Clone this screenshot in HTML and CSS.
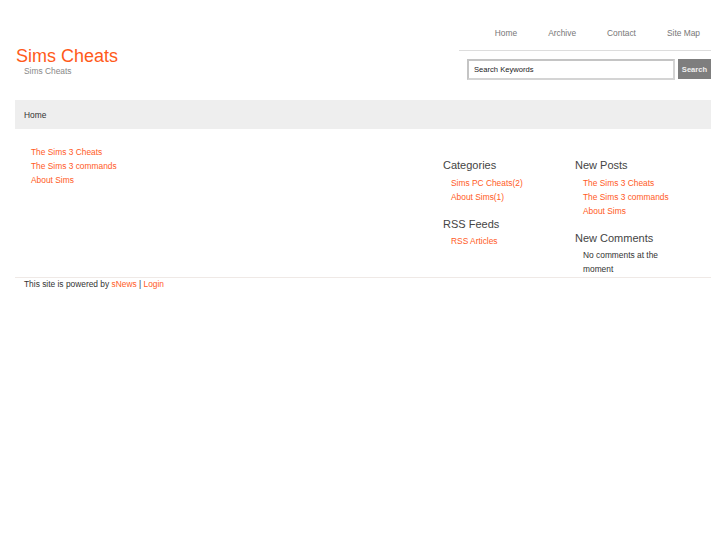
FILE: index.html
```html
<!DOCTYPE html>
<html>
<head>
<meta charset="utf-8">
<title>Sims Cheats</title>
<link rel="stylesheet" href="styles.css">
</head>
<body>
<div class="page">
  <header class="header">
    <div class="brand">
      <h1 class="site-title">Sims Cheats</h1>
      <div class="site-sub">Sims Cheats</div>
    </div>
    <div class="header-right">
      <nav class="topnav">
        <a href="#">Home</a>
        <a href="#">Archive</a>
        <a href="#">Contact</a>
        <a href="#">Site Map</a>
      </nav>
      <form class="search">
        <input class="search-input" type="text" value="Search Keywords">
        <button class="search-btn" type="button">Search</button>
      </form>
    </div>
  </header>
  <div class="crumb">Home</div>
  <div class="content">
    <main class="main">
      <a href="#">The Sims 3 Cheats</a>
      <a href="#">The Sims 3 commands</a>
      <a href="#">About Sims</a>
    </main>
    <aside class="side side-a">
      <h2 class="side-h">Categories</h2>
      <ul class="side-list">
        <li><a href="#">Sims PC Cheats</a><span class="cnt">(2)</span></li>
        <li><a href="#">About Sims</a><span class="cnt">(1)</span></li>
      </ul>
      <h2 class="side-h gap">RSS Feeds</h2>
      <ul class="side-list">
        <li><a href="#">RSS Articles</a></li>
      </ul>
    </aside>
    <aside class="side side-b">
      <h2 class="side-h">New Posts</h2>
      <ul class="side-list">
        <li><a href="#">The Sims 3 Cheats</a></li>
        <li><a href="#">The Sims 3 commands</a></li>
        <li><a href="#">About Sims</a></li>
      </ul>
      <h2 class="side-h gap">New Comments</h2>
      <p class="side-text">No comments at the moment</p>
    </aside>
  </div>
  <footer class="footer">This site is powered by <a href="#">sNews</a> | <a href="#">Login</a></footer>
</div>
</body>
</html>
```

FILE: styles.css
```css
* { box-sizing: border-box; }
html, body { margin: 0; padding: 0; background: #fff; }
body {
  font-family: "Liberation Sans", Arial, sans-serif;
  font-size: 8.4px;
  color: #333;
}
a { color: #ff5a1e; text-decoration: none; }
.page { width: 696px; margin-left: 15px; }

.header { display: flex; justify-content: space-between; align-items: flex-start; height: 100px; }
.brand { padding-top: 47px; padding-left: 1px; }
.site-title {
  margin: 0;
  font-size: 18px;
  font-weight: normal;
  line-height: 19px;
  color: #ff5a1a;
}
.site-sub { margin-left: 8px; line-height: 10px; color: #888; }

.header-right { width: 252px; }
.topnav {
  display: flex;
  justify-content: flex-end;
  gap: 31px;
  padding: 26px 11px 10px 0;
  line-height: 14px;
  border-bottom: 1px solid #ddd;
}
.topnav a { color: #777; }
.search { display: flex; gap: 3px; margin: 8px 0 0 8px; }
.search-input {
  width: 208px;
  height: 21px;
  margin: 0;
  padding: 0 5px;
  border: 2px solid #d4d4d4;
  border-top-color: #c4c4c4;
  border-left-color: #c4c4c4;
  font-family: "Liberation Sans", Arial, sans-serif;
  font-size: 7.6px;
  color: #222;
  outline: none;
}
.search-btn {
  width: 33px;
  height: 20px;
  margin: 0;
  padding: 0;
  border: none;
  background: #7e7e7e;
  color: #eee;
  font-family: "Liberation Sans", Arial, sans-serif;
  font-size: 7.6px;
  font-weight: bold;
}

.crumb {
  height: 29px;
  padding: 1px 0 0 9px;
  line-height: 29px;
  background: #eee;
  color: #333;
}

.content { display: flex; height: 148px; }
.main {
  flex: 1;
  display: flex;
  flex-direction: column;
  align-items: flex-start;
  padding: 16px 0 0 16px;
  line-height: 14px;
}
.side { padding-top: 29px; }
.side-a { width: 132px; }
.side-b { width: 136px; padding-right: 28px; }
.side-h {
  margin: 0 0 4px;
  font-size: 11px;
  font-weight: normal;
  line-height: 14px;
  color: #444;
}
.side-h.gap { margin-top: 13px; margin-bottom: 3px; }
.side-list { list-style: none; margin: 0; padding: 0 0 0 8px; line-height: 14px; }
.cnt { color: #ff5a1e; }
.side-text { margin: 0; padding-left: 8px; line-height: 14px; color: #333; }

.footer {
  border-top: 1px solid #efe9e6;
  padding-left: 9px;
  line-height: 12px;
  color: #333;
}
```
